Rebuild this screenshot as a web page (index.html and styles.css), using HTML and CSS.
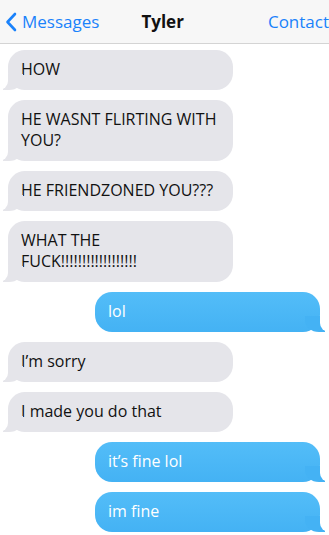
FILE: index.html
```html
<!DOCTYPE html>
<html lang="en">
<head>
    <meta charset="UTF-8">
    <meta name="viewport" content="width=device-width, initial-scale=1.0">
    <title>Tyler</title>
    <link rel="stylesheet" href="styles.css">
</head>
<body>
    <div class="nav-bar">
        <div class="back">
            <svg class="chevron" width="12" height="20" viewBox="0 0 12 20">
                <path d="M10 2 L2.5 10 L10 18" fill="none" stroke="#1a82fb" stroke-width="2.6" stroke-linecap="round" stroke-linejoin="round"/>
            </svg>
            <span>Messages</span>
        </div>
        <div class="name">Tyler</div>
        <div class="contact">Contact</div>
    </div>

    <div class="thread">
        <div class="bubble received">HOW</div>
        <div class="bubble received">HE WASNT FLIRTING WITH YOU?</div>
        <div class="bubble received">HE FRIENDZONED YOU???</div>
        <div class="bubble received">WHAT THE FUCK!!!!!!!!!!!!!!!!!!</div>
        <div class="bubble sent">lol</div>
        <div class="bubble received">I’m sorry</div>
        <div class="bubble received">I made you do that</div>
        <div class="bubble sent">it’s fine lol</div>
        <div class="bubble sent">im fine</div>
    </div>
</body>
</html>
```

FILE: styles.css
```css
body {
    margin: 0;
    background: #ffffff;
    font-family: 'Open Sans', sans-serif;
    color: #111;
    width: 329px;
    overflow: hidden;
}

.nav-bar {
    height: 43px;
    background: #f7f7f7;
    border-bottom: 1px solid #d4d4d4;
    display: flex;
    align-items: center;
    font-size: 17px;
    white-space: nowrap;
}

.back {
    display: flex;
    align-items: center;
    gap: 5px;
    padding-left: 5px;
    width: 135px;
    color: #1a82fb;
}

.name {
    font-weight: bold;
    width: 130px;
    padding-left: 5px;
}

.contact {
    color: #1a82fb;
}

.thread {
    display: flex;
    flex-direction: column;
    gap: 10px;
    padding: 6px 0 0;
}

.bubble {
    position: relative;
    width: 225px;
    box-sizing: border-box;
    padding: 9px 14px 10px 13px;
    font-size: 16px;
    line-height: 21px;
    border-radius: 17px;
}

.received {
    margin-left: 8px;
    background: #e5e5ea;
    color: #111;
}

.sent {
    margin-left: 95px;
    background: linear-gradient(#53bdf8, #44b2f4);
    color: #fff;
}

/* tails */
.bubble::before,
.bubble::after {
    content: '';
    position: absolute;
    bottom: 0;
    height: 16px;
}

.received::before {
    left: -5px;
    width: 20px;
    background: #e5e5ea;
    border-bottom-right-radius: 14px 12px;
}

.received::after {
    left: -12px;
    width: 12px;
    background: #fff;
    border-bottom-right-radius: 9px;
}

.sent::before {
    right: -5px;
    width: 20px;
    background: #44b2f4;
    border-bottom-left-radius: 14px 12px;
}

.sent::after {
    right: -12px;
    width: 12px;
    background: #fff;
    border-bottom-left-radius: 9px;
}
```
